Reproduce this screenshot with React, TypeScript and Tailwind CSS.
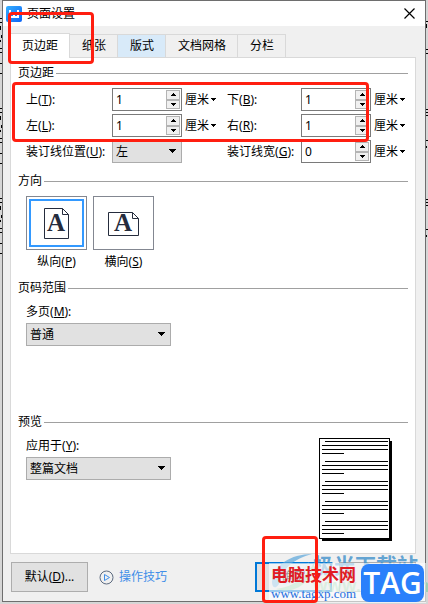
import { useState, type ReactNode } from 'react';

const TABS = ['页边距', '纸张', '版式', '文档网格', '分栏'];

const Key = ({ text, k }: { text: string; k: string }) => (
  <>
    {text}(<u>{k}</u>):
  </>
);

const Section = ({ title, children, className = '' }: { title: string; children: ReactNode; className?: string }) => (
  <section className={className}>
    <div className="mb-[7px] flex items-center gap-0.5">
      <h2 className="leading-4">{title}</h2>
      <div className="h-px flex-1 bg-[#a0a0a0]" />
    </div>
    <div className="pl-2">{children}</div>
  </section>
);

const Arrow = ({ className = '', up = false }: { className?: string; up?: boolean }) => (
  <svg width="5" height="3" viewBox="0 0 5 3" className={className} shapeRendering="crispEdges">
    <path d={up ? 'M2 0h1v1h1v1h1v1H0V2h1V1h1z' : 'M0 0h5v1H4v1H3v1H2V2H1V1H0z'} />
  </svg>
);

const SpinField = ({ id, text, k, value }: { id: string; text: string; k: string; value: string }) => {
  const [num, setNum] = useState(value);
  const step = (d: number) => setNum(String(Math.max(0, Number(num) + d)));

  return (
    <>
      <label htmlFor={id} className="whitespace-nowrap">
        <Key text={text} k={k} />
      </label>
      <div className="flex h-[23px] border border-[#7a7a7a] bg-white p-px">
        <input
          id={id}
          value={num}
          onChange={(e) => setNum(e.target.value)}
          className="w-0 flex-1 pl-0.5 leading-4 outline-none"
        />
        <div className="flex w-[14px] flex-col">
          <button
            aria-label="增加"
            onClick={() => step(1)}
            className="flex flex-1 items-center justify-center border border-[#b4b4b4] bg-[#f0f0f0]"
          >
            <Arrow up />
          </button>
          <button
            aria-label="减少"
            onClick={() => step(-1)}
            className="flex flex-1 items-center justify-center border border-[#b4b4b4] bg-[#f0f0f0]"
          >
            <Arrow />
          </button>
        </div>
      </div>
      <button className="flex items-center gap-0.5 pl-[3px] whitespace-nowrap">
        厘米
        <Arrow />
      </button>
    </>
  );
};

const Select = ({ id, value, className }: { id: string; value: string; className: string }) => (
  <div className={`relative ${className}`}>
    <select
      id={id}
      className="block h-[23px] w-full appearance-none border border-[#acacac] bg-[#e1e1e1] pl-[3px] outline-none"
    >
      <option>{value}</option>
    </select>
    <svg
      width="7"
      height="4"
      viewBox="0 0 7 4"
      shapeRendering="crispEdges"
      className="pointer-events-none absolute top-[9px] right-[6px]"
    >
      <path d="M0 0h7v1H6v1H5v1H4v1H3V3H2V2H1V1H0z" />
    </svg>
  </div>
);

const Orientation = ({
  active,
  wide,
  text,
  k,
  onClick,
}: {
  active: boolean;
  wide: boolean;
  text: string;
  k: string;
  onClick: () => void;
}) => (
  <button onClick={onClick} className="w-[61px]">
    <span className="block h-[54px] border border-[#838791] p-0.5">
      <span
        className={`flex h-full items-center justify-center border-2 ${active ? 'border-[#3399ff]' : 'border-transparent'}`}
      >
        <svg width="31" height="31" viewBox="0 0 31 31" fill="none" stroke="#252c3d" strokeWidth="1">
          {wide ? (
            <path d="M.5 4.500h24l6 6v17H.5zM24.500 4.500v6h6" />
          ) : (
            <path d="M3.500.5h18l6 6v24h-24zM21.500.5v6h6" />
          )}
          <text
            x="15"
            y="23"
            textAnchor="middle"
            fill="#252c3d"
            stroke="none"
            fontFamily="Liberation Serif, serif"
            fontWeight="bold"
            fontSize="25"
          >
            A
          </text>
        </svg>
      </span>
    </span>
    <span className="mt-1 block leading-4">
      {text}(<u>{k}</u>)
    </span>
  </button>
);

const PagePreview = () => (
  <svg width="73" height="103" viewBox="0 0 73 103" shapeRendering="crispEdges" className="mt-px mr-4 shrink-0">
    <path d="M3 3h70v100H3z" fill="#000" />
    <path d="M.5.5h70v100H.5z" fill="#fff" stroke="#000" />
    {[3, 23, 43, 63, 83].map((y) => (
      <path key={y} d={`M6 ${y}h63v1H6zM3 ${y + 4}h66v1H3zM3 ${y + 8}h66v1H3zM3 ${y + 12}h22v1H3z`} />
    ))}
  </svg>
);

const Watermark = () => (
  <div className="pointer-events-none absolute right-[2px] bottom-px h-[50px] w-[157px]">
    <svg width="48" height="42" viewBox="0 0 48 42" className="absolute top-0 left-0 opacity-70">
      <path d="M3 29C4 12 22 1 43 1 25 6 13 15 10 31 6 37 3 34 3 29z" fill="#5ba7dc" />
      <path d="M7 36C25 34 38 23 46 8 43 29 27 42 7 36z" fill="#8ad0a0" />
      <path d="M14 28C24 25 33 18 40 9 35 23 26 31 14 32z" fill="#b9dcf0" />
    </svg>
    <div className="absolute top-0 left-[44px] text-[21px] leading-6 font-bold whitespace-nowrap text-[#3d8fca]/80">
      极光下载站
    </div>
    <div className="absolute top-[23px] left-[44px] text-[17px] leading-5 font-bold text-[#7ccc98]/60">
      www.xz7.com
    </div>
    <div className="absolute inset-x-0 bottom-0 flex h-[40px] items-center justify-between bg-white/60 pr-0.5 pl-0.5">
      <div className="text-center">
        <div className="text-[17px] leading-[22px] font-bold whitespace-nowrap text-[#e01b24]">电脑技术网</div>
        <div className="font-['Liberation_Serif',serif] text-[13px] leading-4 text-[#1f6fe0]">www.tagxp.com</div>
      </div>
      <div className="flex h-[38px] w-[63px] items-center justify-center rounded-lg bg-[#2a80fb] font-['Open_Sans',sans-serif] text-[30px] leading-9 font-semibold text-white">
        TAG
      </div>
    </div>
  </div>
);

export default function App() {
  const [tab, setTab] = useState('页边距');
  const [wide, setWide] = useState(false);

  return (
    <div className="relative min-h-screen bg-[#d6d6d6] pr-[2px] pb-[2px] pl-[2px] font-['Noto_Sans','Noto_Sans_CJK_SC',sans-serif] text-[12px] leading-4 text-black">
      {/* edges of the document text behind the dialog */}
      <svg width="2" height="300" viewBox="0 0 2 300" className="absolute top-0 left-0" shapeRendering="crispEdges">
        {[18, 108, 198].map((y) => (
          <path key={y} d={`M0 ${y}h2v1H0zM0 ${y + 4}h2v1H0zM0 ${y + 8}h1v4H0zM1 ${y + 17}h1v3H1zM0 ${y + 22}h1v2H0zM0 ${y + 30}h2v1H0zM0 ${y + 34}h2v1H0zM0 ${y + 45}h2v1H0zM0 ${y + 55}h2v1H0z`} />
        ))}
      </svg>
      <svg width="2" height="300" viewBox="0 0 2 300" className="absolute top-0 right-0" shapeRendering="crispEdges">
        <path d="M0 21h2v1H0zM0 24h1v4H0zM0 49h2v1H0zM0 53h2v1H0zM0 109h2v1H0zM0 112h2v1H0zM0 115h2v1H0zM0 140h2v1H0zM0 146h1v2H0zM0 199h2v1H0zM0 202h2v1H0zM0 205h2v1H0zM0 229h2v1H0zM0 235h1v2H0z" />
      </svg>

      <main className="border border-[#6e6e6e] bg-[#f0f0f0]">
        <header className="flex h-[25px] items-center justify-between bg-white pr-2.5 pl-[3px]">
          <div className="flex items-center gap-[5px]">
            <svg width="16" height="16" viewBox="0 0 16 16">
              <defs>
                <linearGradient id="logo" x1="0" y1="0" x2="1" y2="1">
                  <stop offset="0" stopColor="#35b0ff" />
                  <stop offset="1" stopColor="#0b63f6" />
                </linearGradient>
              </defs>
              <rect width="16" height="16" rx="2" fill="url(#logo)" />
              <path d="M4 4v7h4V7v4h4V4" fill="none" stroke="#fff" strokeWidth="2" />
            </svg>
            <h1>页面设置</h1>
          </div>
          <button aria-label="关闭">
            <svg width="11" height="11" viewBox="0 0 11 11" stroke="#000" strokeWidth="1.200">
              <path d="M.5.5l10 10M10.500.5l-10 10" />
            </svg>
          </button>
        </header>

        <div className="pt-[7px] pr-[9px] pb-[9px] pl-[7px]">
          <div role="tablist" className="flex items-end">
            {TABS.map((t) => (
              <button
                key={t}
                role="tab"
                aria-selected={t === tab}
                onClick={() => setTab(t)}
                className={
                  t === tab
                    ? 'relative -mb-px h-[25px] border border-b-0 border-[#d9d9d9] bg-white px-[11px]'
                    : `h-[23px] border-t border-r border-[#d9d9d9] pr-[11px] pl-3 ${t === '版式' ? 'bg-[#d8eaf9]' : 'bg-[#f0f0f0]'}`
                }
              >
                {t}
              </button>
            ))}
          </div>

          <div role="tabpanel" className="border border-[#d9d9d9] bg-white px-[7px] pt-[7px] pb-3">
            <Section title="页边距">
              <div className="grid grid-cols-[86px_70px_45px_74px_70px_1fr] items-center gap-y-[3px]">
                <SpinField id="top" text="上" k="T" value="1" />
                <SpinField id="bottom" text="下" k="B" value="1" />
                <SpinField id="left" text="左" k="L" value="1" />
                <SpinField id="right" text="右" k="R" value="1" />
                <label htmlFor="gutter-pos" className="whitespace-nowrap">
                  <Key text="装订线位置" k="U" />
                </label>
                <Select id="gutter-pos" value="左" className="col-span-2 w-[70px]" />
                <SpinField id="gutter" text="装订线宽" k="G" value="0" />
              </div>
            </Section>

            <Section title="方向" className="mt-2.5">
              <div className="flex gap-1.5">
                <Orientation active={!wide} wide={false} text="纵向" k="P" onClick={() => setWide(false)} />
                <Orientation active={wide} wide text="横向" k="S" onClick={() => setWide(true)} />
              </div>
            </Section>

            <Section title="页码范围" className="mt-2.5">
              <label htmlFor="pages" className="mb-0.5 block leading-[18px]">
                <Key text="多页" k="M" />
              </label>
              <Select id="pages" value="普通" className="w-[145px]" />
            </Section>

            <Section title="预览" className="mt-[68px]">
              <div className="flex justify-between">
                <div>
                  <label htmlFor="apply" className="mb-0.5 block leading-[18px]">
                    <Key text="应用于" k="Y" />
                  </label>
                  <Select id="apply" value="整篇文档" className="w-[145px]" />
                </div>
                <PagePreview />
              </div>
            </Section>
          </div>

          <footer className="mt-2 flex items-center pl-px">
            <button className="h-[30px] w-[77px] border border-[#adadad] bg-[#e1e1e1]">
              默认(<u>D</u>)...
            </button>
            <a href="#tips" className="ml-[11px] flex items-center gap-[5px] text-[#3f8ee8]">
              <svg width="15" height="15" viewBox="0 0 15 15" fill="none">
                <circle cx="7.500" cy="7.500" r="6.500" stroke="#5d6b80" />
                <path d="M5.500 4.500v6l5-3z" stroke="#3f8ee8" />
              </svg>
              操作技巧
            </a>
            <button className="ml-auto h-[30px] w-[77px] border-2 border-[#0078d7] bg-[#e1e1e1]">确定</button>
            <button className="ml-[7px] h-[30px] w-[77px] border border-[#adadad] bg-[#e1e1e1]">取消</button>
          </footer>
        </div>
      </main>

      <Watermark />

      {/* highlight frames */}
      <div className="pointer-events-none absolute top-[12px] left-[8px] h-[52px] w-[86px] rounded-sm border-3 border-[#ff1e10]" />
      <div className="pointer-events-none absolute top-[82px] left-[12px] h-[60px] w-[357px] rounded-sm border-3 border-[#ff1e10]" />
      <div className="pointer-events-none absolute right-[110px] bottom-px h-[67px] w-[56px] rounded-sm border-3 border-[#ff1e10]" />
    </div>
  );
}
